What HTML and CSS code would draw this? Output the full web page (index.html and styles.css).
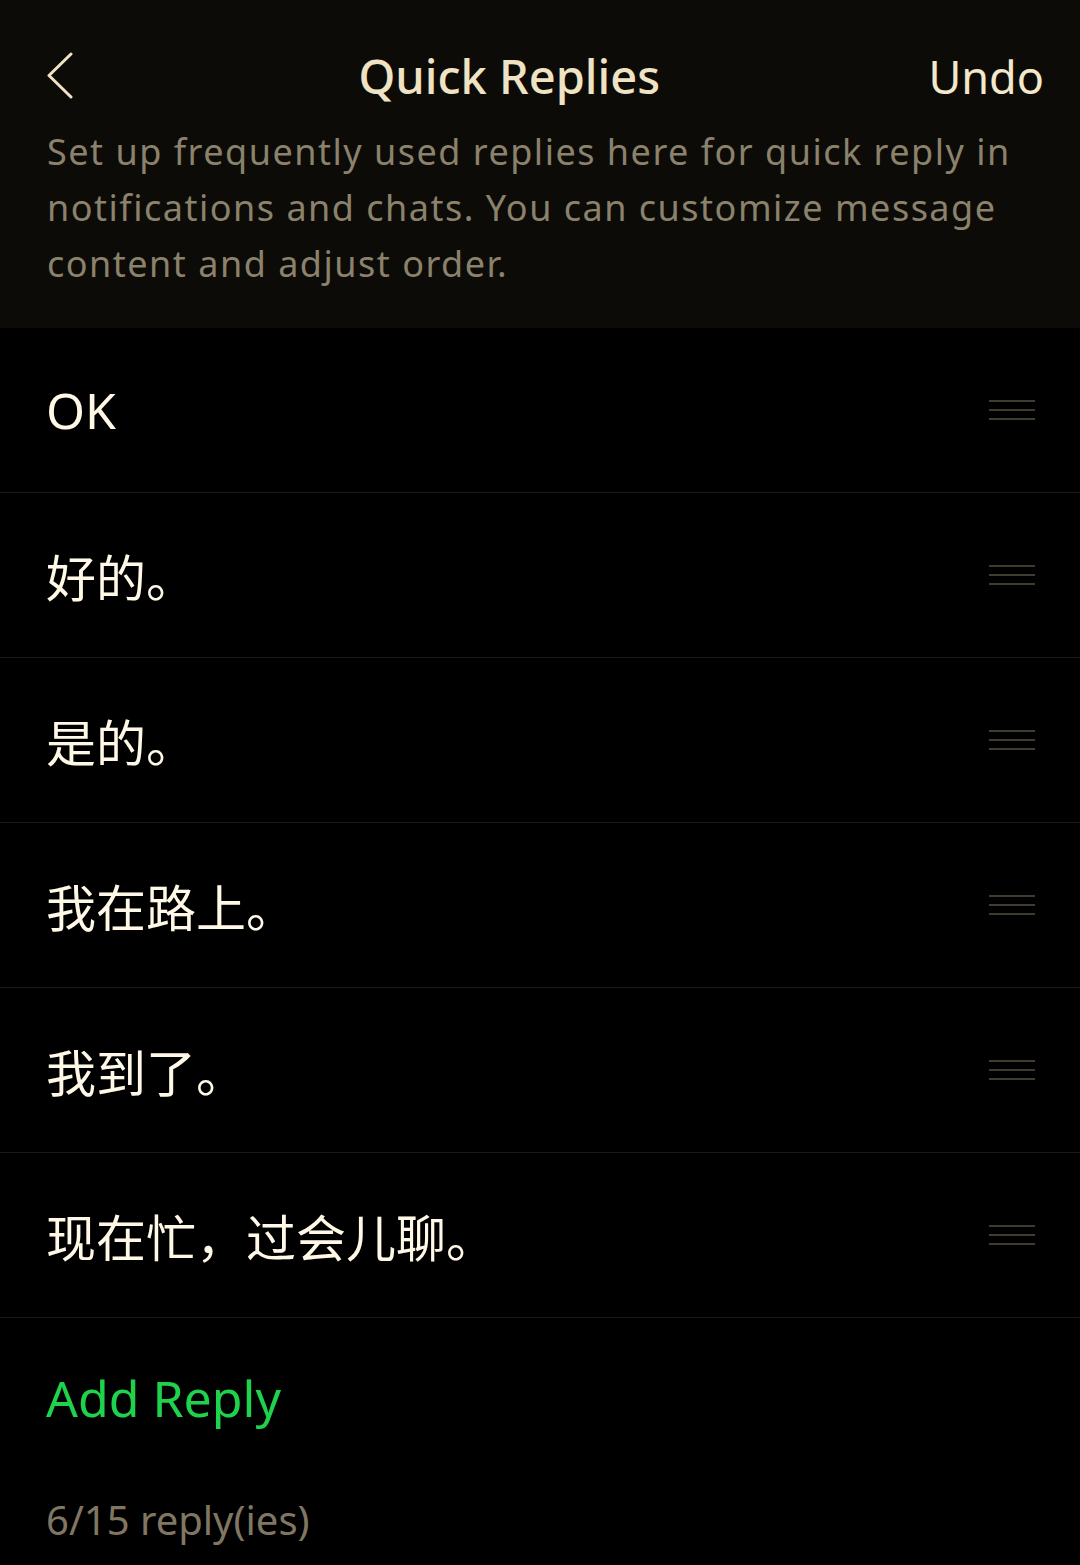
FILE: index.html
```html
<!DOCTYPE html>
<html lang="en">
<head>
    <meta charset="UTF-8">
    <meta name="viewport" content="width=device-width, initial-scale=1.0">
    <title>Quick Replies</title>
    <link rel="stylesheet" href="styles.css">
</head>
<body>
    <div class="header">
        <div class="topbar">
            <button class="back" aria-label="Back">
                <svg width="30" height="48" viewBox="0 0 30 48">
                    <path d="M25 2 L3 23.5 L25 45" fill="none" stroke="#efe3c4" stroke-width="3" stroke-linecap="round" stroke-linejoin="round"/>
                </svg>
            </button>
            <h1 class="title">Quick Replies</h1>
            <button class="undo">Undo</button>
        </div>
        <p class="desc">Set up frequently used replies here for quick reply in notifications and chats. You can customize message content and adjust order.</p>
    </div>

    <ul class="reply-list">
        <li class="reply"><span class="reply-text">OK</span><span class="handle"></span></li>
        <li class="reply"><span class="reply-text">好的。</span><span class="handle"></span></li>
        <li class="reply"><span class="reply-text">是的。</span><span class="handle"></span></li>
        <li class="reply"><span class="reply-text">我在路上。</span><span class="handle"></span></li>
        <li class="reply"><span class="reply-text">我到了。</span><span class="handle"></span></li>
        <li class="reply"><span class="reply-text">现在忙，过会儿聊。</span><span class="handle"></span></li>
    </ul>

    <div class="add-reply">Add Reply</div>
    <div class="count">6/15 reply(ies)</div>
</body>
</html>
```

FILE: styles.css
```css
body {
    margin: 0;
    background: #000;
    font-family: "Noto Sans", "Noto Sans CJK SC", sans-serif;
    color: #fff6e2;
    width: 1080px;
    min-height: 1565px;
}

.header {
    background: #0d0b08;
    padding: 28px 0 36px;
}

.topbar {
    height: 96px;
    display: flex;
    align-items: center;
    padding: 0 36px 0 46px;
}

.back {
    background: none;
    border: none;
    padding: 0;
    width: 30px;
    height: 48px;
    display: flex;
}

.title {
    flex: 1;
    margin: 0 0 0 14px;
    text-align: center;
    font-size: 47px;
    font-weight: 500;
    color: #efe3c4;
}

.undo {
    background: none;
    border: none;
    padding: 0;
    font-family: inherit;
    font-size: 45px;
    color: #f3e8cb;
}

.desc {
    margin: 0;
    padding: 0 40px 0 47px;
    font-size: 36px;
    letter-spacing: 1.5px;
    line-height: 56px;
    color: #8b826c;
}

.reply-list {
    list-style: none;
    margin: 0;
    padding: 0;
}

.reply {
    height: 164px;
    border-bottom: 1px solid #1b1914;
    display: flex;
    align-items: center;
    justify-content: space-between;
    padding: 0 45px 0 46px;
}

.reply-text {
    font-size: 50px;
    color: #fff8e6;
}

.handle {
    width: 46px;
    height: 16px;
    border-top: 2px solid #3f3b2f;
    border-bottom: 2px solid #3f3b2f;
    position: relative;
}

.handle::after {
    content: "";
    position: absolute;
    left: 0;
    right: 0;
    top: 7px;
    height: 2px;
    background: #3f3b2f;
}

.add-reply {
    height: 160px;
    display: flex;
    align-items: center;
    padding-left: 46px;
    font-size: 50px;
    color: #1ed24c;
}

.count {
    margin-top: 12px;
    padding-left: 46px;
    font-size: 40px;
    line-height: 60px;
    color: #807763;
}
```
